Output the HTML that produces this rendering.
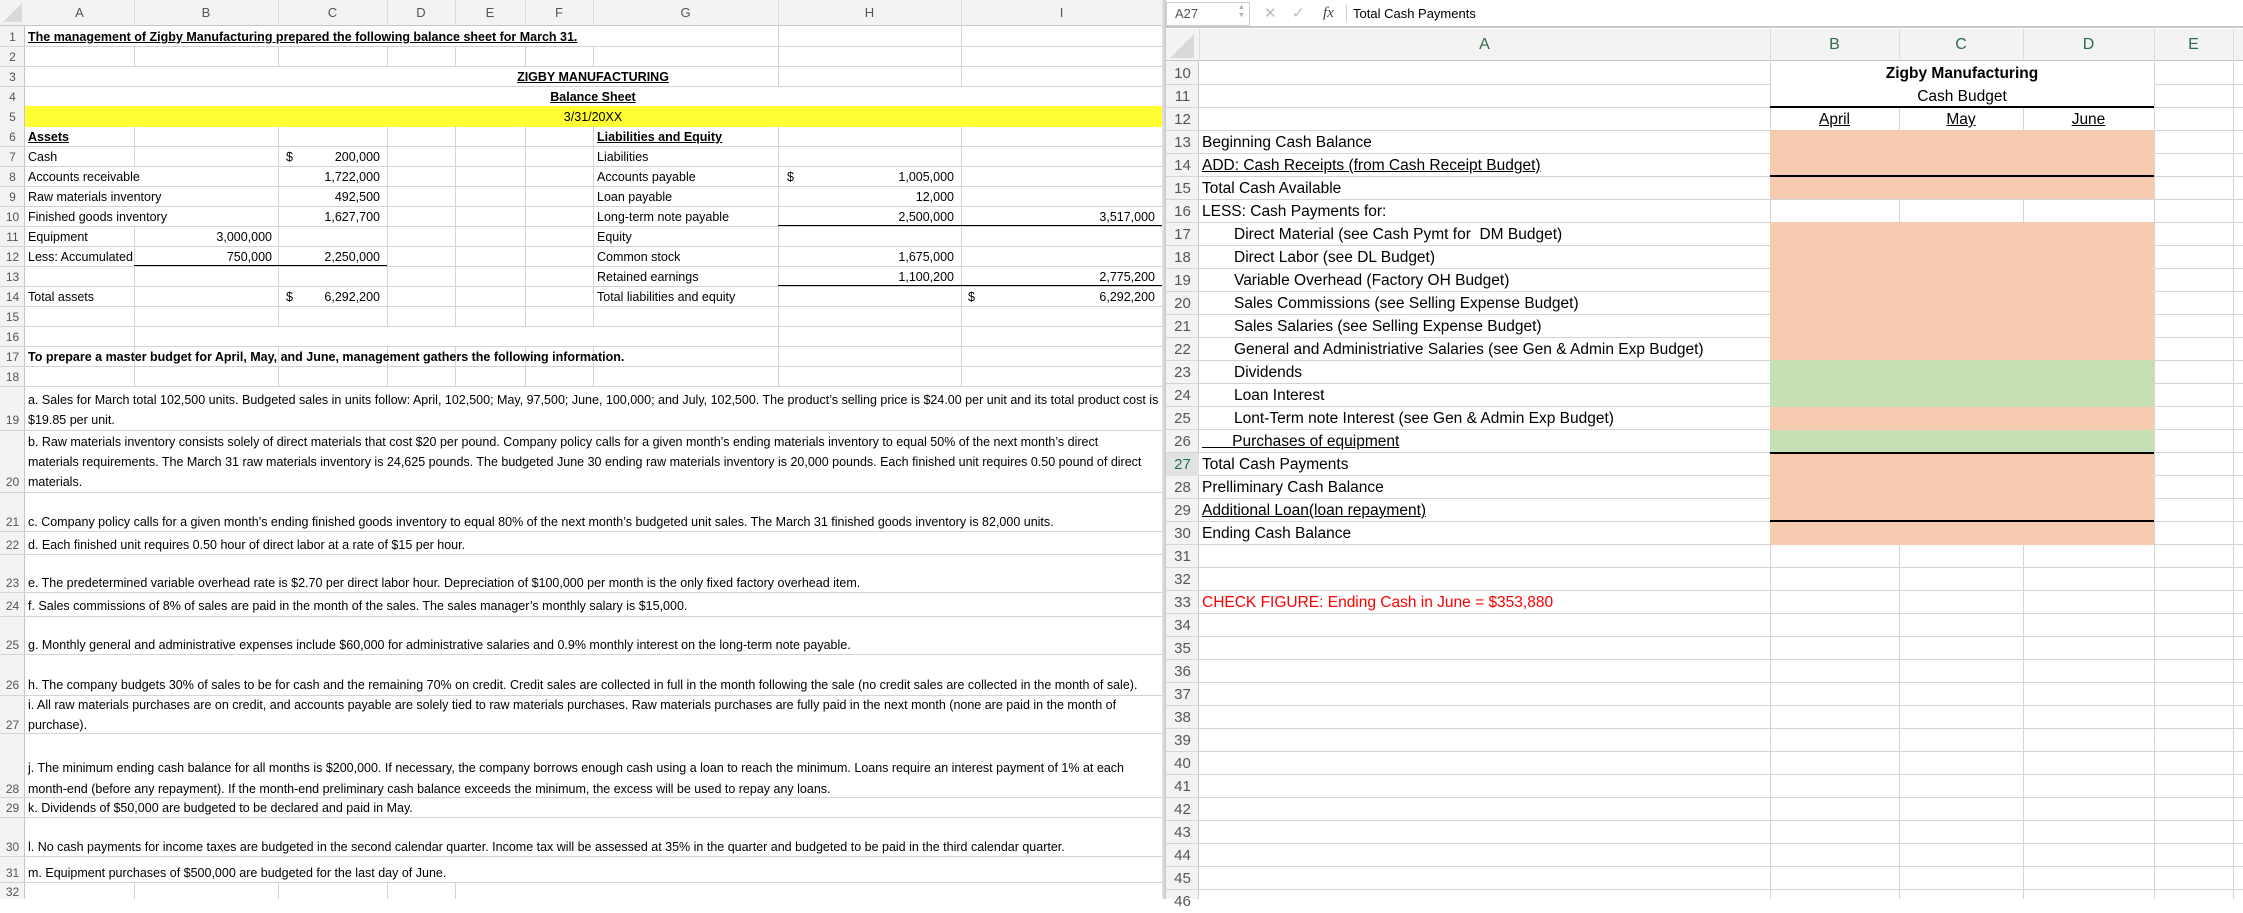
<!DOCTYPE html>
<html><head><meta charset="utf-8">
<style>
*{margin:0;padding:0;box-sizing:border-box}
body{width:2243px;height:899px;position:relative;overflow:hidden;background:#fff;font-family:"Liberation Sans",Arial,sans-serif;color:#000}
.a{position:absolute}
.t{position:absolute;white-space:nowrap;font-size:12.5px;line-height:20px}
.r{text-align:right}
.h{position:absolute;height:1px;background:#d4d4d4}
.v{position:absolute;width:1px;background:#d4d4d4}
.rn{position:absolute;width:25px;text-align:center;font-size:12px;line-height:20px;color:#555}
.ch{position:absolute;top:0;height:26px;line-height:26px;font-size:13px;color:#555;text-align:center}
.b{font-weight:bold}
.u{text-decoration:underline}
.R{position:absolute;white-space:nowrap;font-size:15.5px;line-height:23px}
.rn2{position:absolute;left:1166px;width:33px;text-align:center;font-size:15px;line-height:23px;color:#555}
.k{position:absolute;height:2px;background:#000}
</style></head><body>

<div class="a" style="left:0;top:0;width:1162px;height:26px;background:#f3f3f3;border-bottom:1px solid #c6c6c6"></div>
<div class="a" style="left:3px;top:3px;width:0;height:0;border-left:19px solid transparent;border-bottom:19px solid #d9d9d9"></div>
<div class="ch" style="left:25px;width:109px">A</div>
<div class="ch" style="left:134px;width:144px">B</div>
<div class="ch" style="left:278px;width:109px">C</div>
<div class="ch" style="left:387px;width:68px">D</div>
<div class="ch" style="left:455px;width:70px">E</div>
<div class="ch" style="left:525px;width:68px">F</div>
<div class="ch" style="left:593px;width:185px">G</div>
<div class="ch" style="left:778px;width:183px">H</div>
<div class="ch" style="left:961px;width:201px">I</div>
<div class="v" style="left:134px;top:0;height:26px;background:#ddd"></div>
<div class="v" style="left:278px;top:0;height:26px;background:#ddd"></div>
<div class="v" style="left:387px;top:0;height:26px;background:#ddd"></div>
<div class="v" style="left:455px;top:0;height:26px;background:#ddd"></div>
<div class="v" style="left:525px;top:0;height:26px;background:#ddd"></div>
<div class="v" style="left:593px;top:0;height:26px;background:#ddd"></div>
<div class="v" style="left:778px;top:0;height:26px;background:#ddd"></div>
<div class="v" style="left:961px;top:0;height:26px;background:#ddd"></div>

<div class="a" style="left:0;top:26px;width:25px;height:873px;background:#f3f3f3;border-right:1px solid #c6c6c6"></div>
<div class="a" style="left:25px;top:106px;width:1137px;height:21px;background:#ffff33"></div>

<div class="h" style="left:0;top:46px;width:1162px"></div>
<div class="h" style="left:0;top:66px;width:1162px"></div>
<div class="h" style="left:0;top:86px;width:1162px"></div>
<div class="h" style="left:0;top:146px;width:1162px"></div>
<div class="h" style="left:0;top:166px;width:1162px"></div>
<div class="h" style="left:0;top:186px;width:1162px"></div>
<div class="h" style="left:0;top:206px;width:1162px"></div>
<div class="h" style="left:0;top:226px;width:1162px"></div>
<div class="h" style="left:0;top:246px;width:1162px"></div>
<div class="h" style="left:0;top:266px;width:1162px"></div>
<div class="h" style="left:0;top:286px;width:1162px"></div>
<div class="h" style="left:0;top:306px;width:1162px"></div>
<div class="h" style="left:0;top:326px;width:1162px"></div>
<div class="h" style="left:0;top:346px;width:1162px"></div>
<div class="h" style="left:0;top:366px;width:1162px"></div>
<div class="h" style="left:0;top:386px;width:1162px"></div>
<div class="h" style="left:0;top:430px;width:1162px"></div>
<div class="h" style="left:0;top:492px;width:1162px"></div>
<div class="h" style="left:0;top:531px;width:1162px"></div>
<div class="h" style="left:0;top:554px;width:1162px"></div>
<div class="h" style="left:0;top:592px;width:1162px"></div>
<div class="h" style="left:0;top:616px;width:1162px"></div>
<div class="h" style="left:0;top:654px;width:1162px"></div>
<div class="h" style="left:0;top:695px;width:1162px"></div>
<div class="h" style="left:0;top:733px;width:1162px"></div>
<div class="h" style="left:0;top:797px;width:1162px"></div>
<div class="h" style="left:0;top:817px;width:1162px"></div>
<div class="h" style="left:0;top:856px;width:1162px"></div>
<div class="h" style="left:0;top:882px;width:1162px"></div>

<div class="v" style="left:134px;top:46px;height:20px"></div>
<div class="v" style="left:278px;top:46px;height:20px"></div>
<div class="v" style="left:387px;top:46px;height:20px"></div>
<div class="v" style="left:455px;top:46px;height:20px"></div>
<div class="v" style="left:525px;top:46px;height:20px"></div>
<div class="v" style="left:593px;top:46px;height:20px"></div>
<div class="v" style="left:778px;top:26px;height:60px"></div>
<div class="v" style="left:961px;top:26px;height:60px"></div>
<div class="v" style="left:134px;top:126px;height:40px"></div>
<div class="v" style="left:134px;top:226px;height:160px"></div>
<div class="v" style="left:278px;top:126px;height:200px"></div>
<div class="v" style="left:278px;top:346px;height:40px"></div>
<div class="v" style="left:387px;top:126px;height:200px"></div>
<div class="v" style="left:387px;top:346px;height:40px"></div>
<div class="v" style="left:455px;top:126px;height:200px"></div>
<div class="v" style="left:455px;top:346px;height:40px"></div>
<div class="v" style="left:525px;top:126px;height:200px"></div>
<div class="v" style="left:525px;top:346px;height:40px"></div>
<div class="v" style="left:593px;top:126px;height:200px"></div>
<div class="v" style="left:593px;top:346px;height:40px"></div>
<div class="v" style="left:778px;top:126px;height:260px"></div>
<div class="v" style="left:961px;top:126px;height:260px"></div>
<div class="v" style="left:134px;top:882px;height:17px"></div>
<div class="v" style="left:278px;top:882px;height:17px"></div>
<div class="v" style="left:387px;top:882px;height:17px"></div>
<div class="v" style="left:455px;top:882px;height:17px"></div>

<div class="k" style="left:134px;top:265px;width:253px;height:1px"></div>
<div class="k" style="left:778px;top:225px;width:384px;height:1px"></div>
<div class="k" style="left:778px;top:285px;width:384px;height:1px"></div>

<div class="rn" style="top:27px">1</div>
<div class="rn" style="top:47px">2</div>
<div class="rn" style="top:67px">3</div>
<div class="rn" style="top:87px">4</div>
<div class="rn" style="top:107px">5</div>
<div class="rn" style="top:127px">6</div>
<div class="rn" style="top:147px">7</div>
<div class="rn" style="top:167px">8</div>
<div class="rn" style="top:187px">9</div>
<div class="rn" style="top:207px">10</div>
<div class="rn" style="top:227px">11</div>
<div class="rn" style="top:247px">12</div>
<div class="rn" style="top:267px">13</div>
<div class="rn" style="top:287px">14</div>
<div class="rn" style="top:307px">15</div>
<div class="rn" style="top:327px">16</div>
<div class="rn" style="top:347px">17</div>
<div class="rn" style="top:367px">18</div>
<div class="rn" style="top:410px">19</div>
<div class="rn" style="top:472px">20</div>
<div class="rn" style="top:512px">21</div>
<div class="rn" style="top:535px">22</div>
<div class="rn" style="top:573px">23</div>
<div class="rn" style="top:596px">24</div>
<div class="rn" style="top:635px">25</div>
<div class="rn" style="top:675px">26</div>
<div class="rn" style="top:715px">27</div>
<div class="rn" style="top:779px">28</div>
<div class="rn" style="top:798px">29</div>
<div class="rn" style="top:837px">30</div>
<div class="rn" style="top:863px">31</div>
<div class="rn" style="top:882px">32</div>

<div class="t b u" style="left:28px;top:27px">The management of Zigby Manufacturing prepared the following balance sheet for March 31.</div>
<div class="t b u" style="left:443px;top:67px;width:300px;text-align:center">ZIGBY MANUFACTURING</div>
<div class="t b u" style="left:443px;top:87px;width:300px;text-align:center">Balance Sheet</div>
<div class="t" style="left:443px;top:107px;width:300px;text-align:center">3/31/20XX</div>
<div class="t b u" style="left:28px;top:127px">Assets</div>
<div class="t b u" style="left:597px;top:127px">Liabilities and Equity</div>

<div class="t" style="left:28px;top:147px">Cash</div>
<div class="t" style="left:286px;top:147px">$</div>
<div class="t r" style="left:280px;top:147px;width:100px">200,000</div>
<div class="t" style="left:597px;top:147px">Liabilities</div>

<div class="t" style="left:28px;top:167px">Accounts receivable</div>
<div class="t r" style="left:280px;top:167px;width:100px">1,722,000</div>
<div class="t" style="left:597px;top:167px">Accounts payable</div>
<div class="t" style="left:787px;top:167px">$</div>
<div class="t r" style="left:854px;top:167px;width:100px">1,005,000</div>

<div class="t" style="left:28px;top:187px">Raw materials inventory</div>
<div class="t r" style="left:280px;top:187px;width:100px">492,500</div>
<div class="t" style="left:597px;top:187px">Loan payable</div>
<div class="t r" style="left:854px;top:187px;width:100px">12,000</div>

<div class="t" style="left:28px;top:207px">Finished goods inventory</div>
<div class="t r" style="left:280px;top:207px;width:100px">1,627,700</div>
<div class="t" style="left:597px;top:207px">Long-term note payable</div>
<div class="t r" style="left:854px;top:207px;width:100px">2,500,000</div>
<div class="t r" style="left:1055px;top:207px;width:100px">3,517,000</div>

<div class="t" style="left:28px;top:227px">Equipment</div>
<div class="t r" style="left:172px;top:227px;width:100px">3,000,000</div>
<div class="t" style="left:597px;top:227px">Equity</div>

<div class="t" style="left:28px;top:247px">Less: Accumulated</div>
<div class="t r" style="left:172px;top:247px;width:100px">750,000</div>
<div class="t r" style="left:280px;top:247px;width:100px">2,250,000</div>
<div class="t" style="left:597px;top:247px">Common stock</div>
<div class="t r" style="left:854px;top:247px;width:100px">1,675,000</div>

<div class="t" style="left:597px;top:267px">Retained earnings</div>
<div class="t r" style="left:854px;top:267px;width:100px">1,100,200</div>
<div class="t r" style="left:1055px;top:267px;width:100px">2,775,200</div>

<div class="t" style="left:28px;top:287px">Total assets</div>
<div class="t" style="left:286px;top:287px">$</div>
<div class="t r" style="left:280px;top:287px;width:100px">6,292,200</div>
<div class="t" style="left:597px;top:287px">Total liabilities and equity</div>
<div class="t" style="left:968px;top:287px">$</div>
<div class="t r" style="left:1055px;top:287px;width:100px">6,292,200</div>

<div class="t b" style="left:28px;top:347px">To prepare a master budget for April, May, and June, management gathers the following information.</div>

<div class="t" style="left:28px;top:390px">a. Sales for March total 102,500 units. Budgeted sales in units follow: April, 102,500; May, 97,500; June, 100,000; and July, 102,500. The product’s selling price is $24.00 per unit and its total product cost is</div>
<div class="t" style="left:28px;top:410px">$19.85 per unit.</div>
<div class="t" style="left:28px;top:432px">b. Raw materials inventory consists solely of direct materials that cost $20 per pound. Company policy calls for a given month’s ending materials inventory to equal 50% of the next month’s direct</div>
<div class="t" style="left:28px;top:452px">materials requirements. The March 31 raw materials inventory is 24,625 pounds. The budgeted June 30 ending raw materials inventory is 20,000 pounds. Each finished unit requires 0.50 pound of direct</div>
<div class="t" style="left:28px;top:472px">materials.</div>
<div class="t" style="left:28px;top:512px">c. Company policy calls for a given month’s ending finished goods inventory to equal 80% of the next month’s budgeted unit sales. The March 31 finished goods inventory is 82,000 units.</div>
<div class="t" style="left:28px;top:535px">d. Each finished unit requires 0.50 hour of direct labor at a rate of $15 per hour.</div>
<div class="t" style="left:28px;top:573px">e. The predetermined variable overhead rate is $2.70 per direct labor hour. Depreciation of $100,000 per month is the only fixed factory overhead item.</div>
<div class="t" style="left:28px;top:596px">f. Sales commissions of 8% of sales are paid in the month of the sales. The sales manager’s monthly salary is $15,000.</div>
<div class="t" style="left:28px;top:635px">g. Monthly general and administrative expenses include $60,000 for administrative salaries and 0.9% monthly interest on the long-term note payable.</div>
<div class="t" style="left:28px;top:675px">h. The company budgets 30% of sales to be for cash and the remaining 70% on credit. Credit sales are collected in full in the month following the sale (no credit sales are collected in the month of sale).</div>
<div class="t" style="left:28px;top:695px">i. All raw materials purchases are on credit, and accounts payable are solely tied to raw materials purchases. Raw materials purchases are fully paid in the next month (none are paid in the month of</div>
<div class="t" style="left:28px;top:715px">purchase).</div>
<div class="t" style="left:28px;top:758px">j. The minimum ending cash balance for all months is $200,000. If necessary, the company borrows enough cash using a loan to reach the minimum. Loans require an interest payment of 1% at each</div>
<div class="t" style="left:28px;top:779px">month-end (before any repayment). If the month-end preliminary cash balance exceeds the minimum, the excess will be used to repay any loans.</div>
<div class="t" style="left:28px;top:798px">k. Dividends of $50,000 are budgeted to be declared and paid in May.</div>
<div class="t" style="left:28px;top:837px">l. No cash payments for income taxes are budgeted in the second calendar quarter. Income tax will be assessed at 35% in the quarter and budgeted to be paid in the third calendar quarter.</div>
<div class="t" style="left:28px;top:863px">m. Equipment purchases of $500,000 are budgeted for the last day of June.</div>

<div class="a" style="left:1162px;top:0;width:4px;height:899px;background:linear-gradient(to right,#e6e6e6,#c8c8c8)"></div>

<div class="a" style="left:1166px;top:0;width:1077px;height:28px;background:#fff;border-bottom:2px solid #c8c8c8"></div>
<div class="a" style="left:1166px;top:2px;width:84px;height:24px;border:1px solid #cfcfcf;background:#fff"></div>
<div class="a" style="left:1175px;top:4px;font-size:13px;line-height:20px;color:#555">A27</div>
<div class="a" style="left:1238px;top:4px;font-size:7px;line-height:8px;color:#aaa">▲<br>▼</div>
<div class="a" style="left:1264px;top:3px;font-size:15px;line-height:22px;color:#bbb">✕</div>
<div class="a" style="left:1292px;top:3px;font-size:15px;line-height:22px;color:#bbb">✓</div>
<div class="a" style="left:1323px;top:2px;font-size:15px;line-height:22px;color:#444;font-family:'Liberation Serif',serif;font-style:italic">fx</div>
<div class="a" style="left:1346px;top:5px;width:1px;height:16px;background:#ccc"></div>
<div class="a" style="left:1353px;top:4px;font-size:13px;line-height:20px">Total Cash Payments</div>

<div class="a" style="left:1166px;top:29px;width:1077px;height:32px;background:#f3f3f3;border-bottom:1px solid #c6c6c6"></div>
<div class="a" style="left:1170px;top:34px;width:0;height:0;border-left:24px solid transparent;border-bottom:24px solid #d9d9d9"></div>
<div class="a" style="left:1166px;top:61px;width:33px;height:838px;background:#f3f3f3;border-right:1px solid #c6c6c6"></div>
<div class="ch" style="left:1199px;top:29px;width:571px;height:32px;line-height:32px;font-size:16px;color:#2f6b4a">A</div>
<div class="ch" style="left:1770px;top:29px;width:129px;height:32px;line-height:32px;font-size:16px;color:#2f6b4a">B</div>
<div class="ch" style="left:1899px;top:29px;width:124px;height:32px;line-height:32px;font-size:16px;color:#2f6b4a">C</div>
<div class="ch" style="left:2023px;top:29px;width:131px;height:32px;line-height:32px;font-size:16px;color:#2f6b4a">D</div>
<div class="ch" style="left:2154px;top:29px;width:79px;height:32px;line-height:32px;font-size:16px;color:#2f6b4a">E</div>
<div class="v" style="left:1199px;top:29px;height:32px;background:#ddd"></div>
<div class="v" style="left:1770px;top:29px;height:32px;background:#ddd"></div>
<div class="v" style="left:1899px;top:29px;height:32px;background:#ddd"></div>
<div class="v" style="left:2023px;top:29px;height:32px;background:#ddd"></div>
<div class="v" style="left:2154px;top:29px;height:32px;background:#ddd"></div>
<div class="v" style="left:2233px;top:29px;height:32px;background:#ddd"></div>

<div class="a" style="left:1166px;top:84px;width:1077px;height:807px;background:repeating-linear-gradient(to bottom,#d4d4d4 0,#d4d4d4 1px,transparent 1px,transparent 23px)"></div>

<div class="v" style="left:1770px;top:61px;height:838px"></div>
<div class="v" style="left:2154px;top:61px;height:838px"></div>
<div class="v" style="left:2233px;top:61px;height:838px"></div>
<div class="v" style="left:1899px;top:107px;height:792px"></div>
<div class="v" style="left:2023px;top:107px;height:792px"></div>

<div class="a" style="left:1770px;top:130px;width:384px;height:69px;background:#f6cbb0"></div>
<div class="a" style="left:1770px;top:222px;width:384px;height:138px;background:#f6cbb0"></div>
<div class="a" style="left:1770px;top:360px;width:384px;height:47px;background:#c7dfb5"></div>
<div class="a" style="left:1770px;top:407px;width:384px;height:23px;background:#f6cbb0"></div>
<div class="a" style="left:1770px;top:430px;width:384px;height:23px;background:#c7dfb5"></div>
<div class="a" style="left:1770px;top:453px;width:384px;height:92px;background:#f6cbb0"></div>
<div class="a" style="left:1771px;top:62px;width:383px;height:45px;background:#fff"></div>

<div class="k" style="left:1770px;top:106px;width:384px"></div>
<div class="k" style="left:1770px;top:175px;width:384px"></div>
<div class="k" style="left:1770px;top:452px;width:384px"></div>
<div class="k" style="left:1770px;top:520px;width:384px"></div>

<div class="rn2" style="top:62px">10</div>
<div class="rn2" style="top:85px">11</div>
<div class="rn2" style="top:108px">12</div>
<div class="rn2" style="top:131px">13</div>
<div class="rn2" style="top:154px">14</div>
<div class="rn2" style="top:177px">15</div>
<div class="rn2" style="top:200px">16</div>
<div class="rn2" style="top:223px">17</div>
<div class="rn2" style="top:246px">18</div>
<div class="rn2" style="top:269px">19</div>
<div class="rn2" style="top:292px">20</div>
<div class="rn2" style="top:315px">21</div>
<div class="rn2" style="top:338px">22</div>
<div class="rn2" style="top:361px">23</div>
<div class="rn2" style="top:384px">24</div>
<div class="rn2" style="top:407px">25</div>
<div class="rn2" style="top:430px">26</div>
<div class="rn2" style="top:453px;color:#217346;background:#e2e2e2">27</div>
<div class="rn2" style="top:476px">28</div>
<div class="rn2" style="top:499px">29</div>
<div class="rn2" style="top:522px">30</div>
<div class="rn2" style="top:545px">31</div>
<div class="rn2" style="top:568px">32</div>
<div class="rn2" style="top:591px">33</div>
<div class="rn2" style="top:614px">34</div>
<div class="rn2" style="top:637px">35</div>
<div class="rn2" style="top:660px">36</div>
<div class="rn2" style="top:683px">37</div>
<div class="rn2" style="top:706px">38</div>
<div class="rn2" style="top:729px">39</div>
<div class="rn2" style="top:752px">40</div>
<div class="rn2" style="top:775px">41</div>
<div class="rn2" style="top:798px">42</div>
<div class="rn2" style="top:821px">43</div>
<div class="rn2" style="top:844px">44</div>
<div class="rn2" style="top:867px">45</div>
<div class="rn2" style="top:890px">46</div>

<div class="R b" style="left:1770px;top:62px;width:384px;text-align:center">Zigby Manufacturing</div>
<div class="R" style="left:1770px;top:85px;width:384px;text-align:center">Cash Budget</div>
<div class="R u" style="left:1770px;top:108px;width:129px;text-align:center">April</div>
<div class="R u" style="left:1899px;top:108px;width:124px;text-align:center">May</div>
<div class="R u" style="left:2023px;top:108px;width:131px;text-align:center">June</div>

<div class="R" style="left:1202px;top:131px">Beginning Cash Balance</div>
<div class="R u" style="left:1202px;top:154px">ADD: Cash Receipts (from Cash Receipt Budget)</div>
<div class="R" style="left:1202px;top:177px">Total Cash Available</div>
<div class="R" style="left:1202px;top:200px">LESS: Cash Payments for:</div>
<div class="R" style="left:1234px;top:223px">Direct Material (see Cash Pymt for&nbsp; DM Budget)</div>
<div class="R" style="left:1234px;top:246px">Direct Labor (see DL Budget)</div>
<div class="R" style="left:1234px;top:269px">Variable Overhead (Factory OH Budget)</div>
<div class="R" style="left:1234px;top:292px">Sales Commissions (see Selling Expense Budget)</div>
<div class="R" style="left:1234px;top:315px">Sales Salaries (see Selling Expense Budget)</div>
<div class="R" style="left:1234px;top:338px">General and Administriative Salaries (see Gen &amp; Admin Exp Budget)</div>
<div class="R" style="left:1234px;top:361px">Dividends</div>
<div class="R" style="left:1234px;top:384px">Loan Interest</div>
<div class="R" style="left:1234px;top:407px">Lont-Term note Interest (see Gen &amp; Admin Exp Budget)</div>
<div class="R u" style="left:1202px;top:430px;white-space:pre">       Purchases of equipment</div>
<div class="R" style="left:1202px;top:453px">Total Cash Payments</div>
<div class="R" style="left:1202px;top:476px">Prelliminary Cash Balance</div>
<div class="R u" style="left:1202px;top:499px">Additional Loan(loan repayment)</div>
<div class="R" style="left:1202px;top:522px">Ending Cash Balance</div>
<div class="R" style="left:1202px;top:591px;color:#ff0000">CHECK FIGURE: Ending Cash in June = $353,880</div>

</body></html>
